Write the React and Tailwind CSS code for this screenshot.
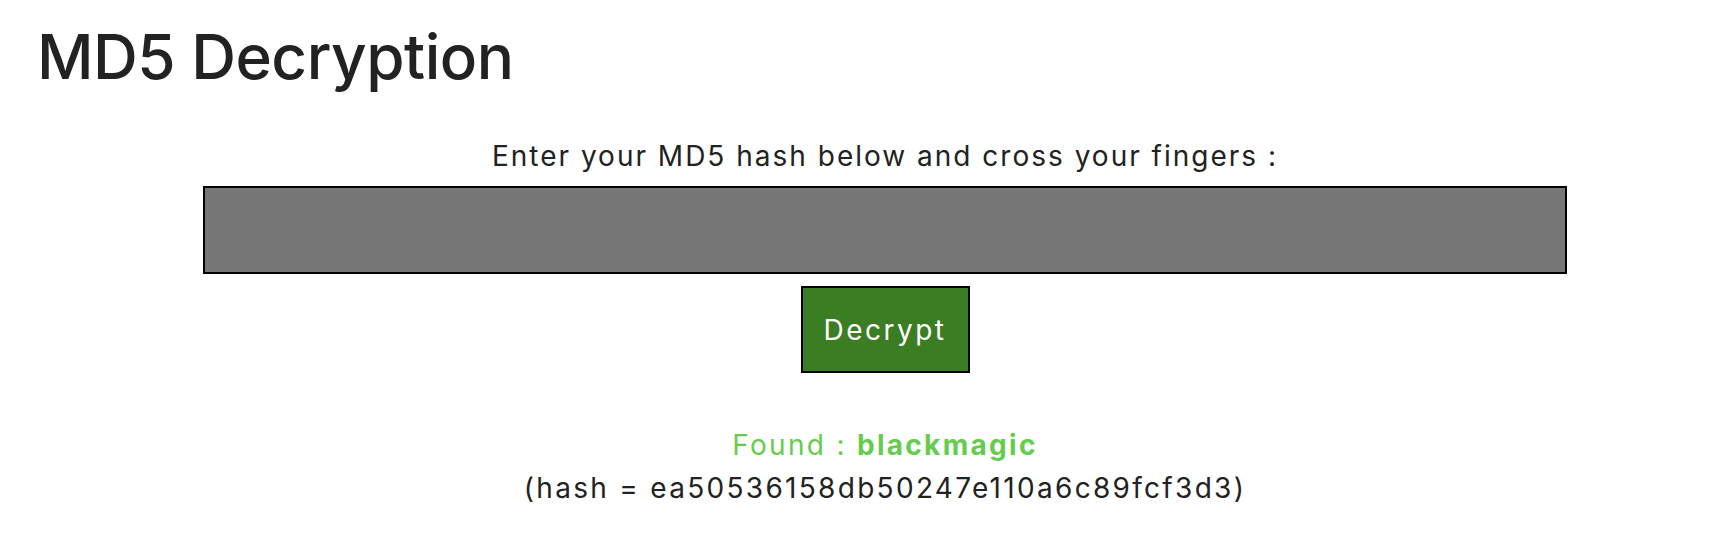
import React, { useState } from 'react';

export default function App() {
  const [hash, setHash] = useState('');

  return (
    <div className="min-h-screen bg-white text-[#222222]" style={{ fontFamily: "Inter, 'Liberation Sans', sans-serif" }}>
      <div className="pl-[37px] pt-[20px]">
        <h1 className="text-[62px] font-medium leading-[74px] tracking-[-0.5px] text-[#222222]">MD5 Decryption</h1>
      </div>

      <div className="pl-[46px] flex flex-col items-center">
        <p className="mt-[46px] text-[28px] leading-[32px] tracking-[2px] text-[#222222]">Enter your MD5 hash below and cross your fingers :</p>
        <input
          type="text"
          value={hash}
          onChange={e => setHash(e.target.value)}
          className="mt-[14px] w-[1364px] h-[88px] bg-[#777777] border-2 border-black outline-none px-4 text-white text-2xl"
        />
        <button className="mt-[12px] w-[169px] h-[87px] bg-[#3a7d23] border-2 border-black text-white text-[28px] tracking-[2.5px]">
          Decrypt
        </button>

        <div className="mt-[51px] text-center text-[28px] leading-[43px] tracking-[2.3px]">
          <p className="text-[#66cc4d]">Found : <span className="font-bold">blackmagic</span></p>
          <p className="text-[#222222]">(hash = ea50536158db50247e110a6c89fcf3d3)</p>
        </div>
      </div>
    </div>
  );
}
